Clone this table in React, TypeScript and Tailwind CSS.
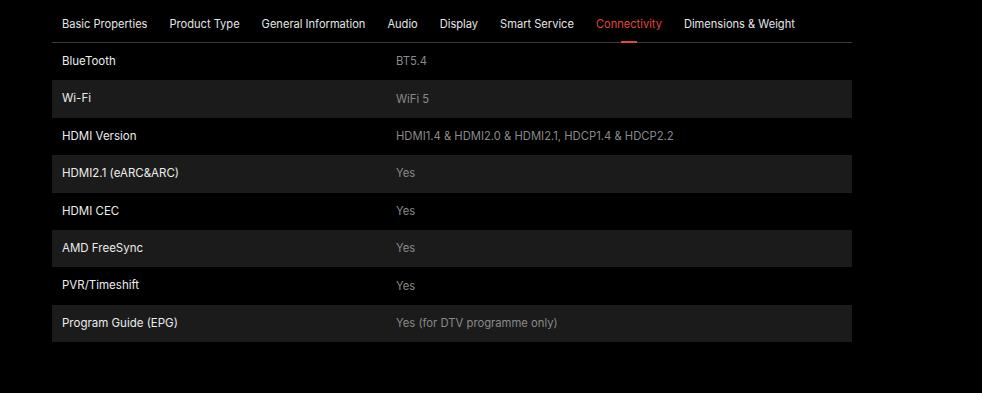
import React from "react";

const tabs = [
  "Basic Properties",
  "Product Type",
  "General Information",
  "Audio",
  "Display",
  "Smart Service",
  "Connectivity",
  "Dimensions & Weight",
];

const rows: [string, string][] = [
  ["BlueTooth", "BT5.4"],
  ["Wi-Fi", "WiFi 5"],
  ["HDMI Version", "HDMI1.4 & HDMI2.0 & HDMI2.1, HDCP1.4 & HDCP2.2"],
  ["HDMI2.1 (eARC&ARC)", "Yes"],
  ["HDMI CEC", "Yes"],
  ["AMD FreeSync", "Yes"],
  ["PVR/Timeshift", "Yes"],
  ["Program Guide (EPG)", "Yes (for DTV programme only)"],
];

export default function App() {
  return (
    <div
      className="w-[982px] h-[393px] bg-black overflow-hidden"
      style={{ fontFamily: "Inter, 'Noto Sans', sans-serif" }}
    >
      <div className="ml-[52px] w-[800px]">
        <div className="flex h-[43px] border-b border-[#3a3a3a] pl-[10px] gap-[22px] text-[11.1px]">
          {tabs.map((t) => {
            const active = t === "Connectivity";
            return (
              <div
                key={t}
                className={`relative flex items-center h-full pt-[6px] ${
                  active ? "text-[#e4443c]" : "text-[#e6e6e6]"
                }`}
              >
                {t}
                {active && (
                  <span className="absolute bottom-[-1px] left-1/2 -translate-x-1/2 w-[16px] h-[2px] bg-[#e4443c]" />
                )}
              </div>
            );
          })}
        </div>
        <div>
          {rows.map(([k, v], i) => (
            <div
              key={k}
              className={`flex items-center h-[37.4px] ${
                i % 2 === 1 ? "bg-[#1b1b1b]" : "bg-black"
              }`}
            >
              <div className="w-[344px] pl-[10px] text-[11.5px] text-[#ececec]">{k}</div>
              <div className="text-[11.25px] text-[#8a8a8a]">{v}</div>
            </div>
          ))}
        </div>
      </div>
    </div>
  );
}
